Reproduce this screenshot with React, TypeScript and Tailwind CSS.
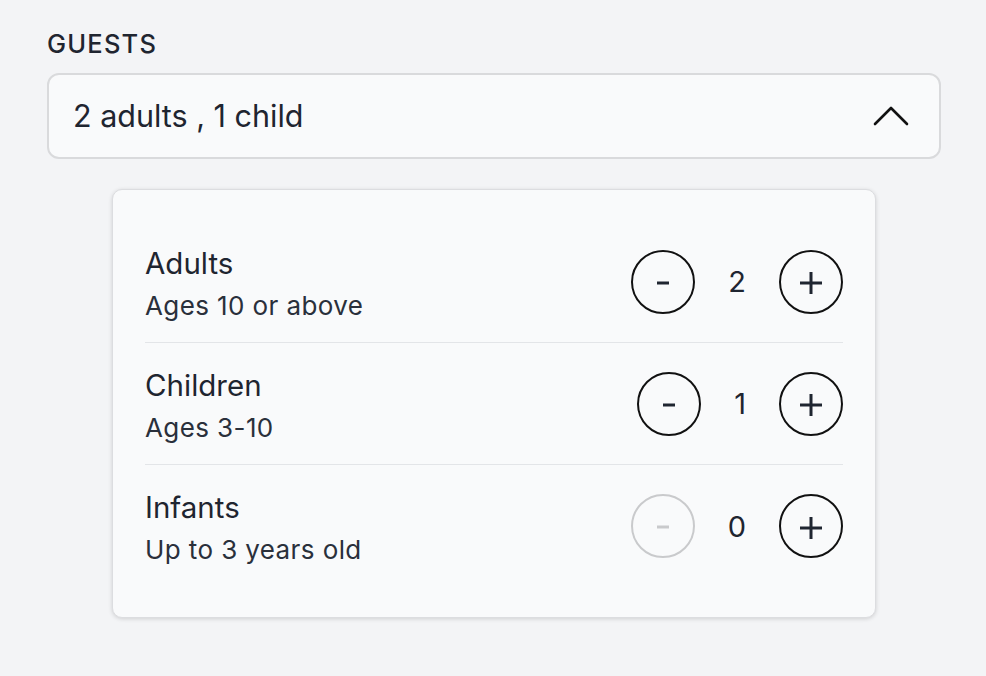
import React, { useState } from 'react'

interface RowProps {
    title: string
    subtitle: string
    value: number
    min: number
    onChange: (v: number) => void
    last?: boolean
}

function CounterRow({ title, subtitle, value, min, onChange, last }: RowProps) {
    const canDec = value > min
    return (
        <div className={`flex items-center justify-between h-[122px] ${last ? '' : 'border-b border-[#e3e5e8]'}`}>
            <div className='flex flex-col pt-[4px]'>
                <span className='text-[29.5px] leading-[36px] text-[#1f2530]'>{title}</span>
                <span className='text-[26px] leading-[34px] mt-[8px] tracking-[0.4px] text-[#2a303b]'>{subtitle}</span>
            </div>
            <div className='flex items-center gap-[33px]'>
                <button
                    onClick={() => canDec && onChange(value - 1)}
                    className={`w-[64px] h-[64px] rounded-full border-2 flex items-center justify-center ${canDec ? 'border-[#111]' : 'border-[#c9cacc]'}`}
                >
                    <svg width='14' height='14' viewBox='0 0 14 14'>
                        <line x1='1' y1='8' x2='13' y2='8' stroke={canDec ? '#1f2530' : '#c9cacc'} strokeWidth='3' />
                    </svg>
                </button>
                <span className='text-[29px] leading-none text-[#1f2530] text-center'>{value}</span>
                <button
                    onClick={() => onChange(value + 1)}
                    className='w-[64px] h-[64px] rounded-full border-2 border-[#111] flex items-center justify-center'
                >
                    <svg width='22' height='22' viewBox='0 0 22 22' className='mt-[3px]'>
                        <line x1='0' y1='11' x2='22' y2='11' stroke='#1f2530' strokeWidth='3' />
                        <line x1='11' y1='0' x2='11' y2='22' stroke='#1f2530' strokeWidth='3' />
                    </svg>
                </button>
            </div>
        </div>
    )
}

export default function App() {
    const [adults, setAdults] = useState(2)
    const [children, setChildren] = useState(1)
    const [infants, setInfants] = useState(0)

    const summary = `${adults} adults , ${children} child`

    return (
        <div className='min-h-screen bg-[#f3f4f6] pl-[47px] pr-[45px] pt-[27px]' style={{ fontFamily: 'Inter, "Noto Sans", sans-serif' }}>
            <div className='text-[25.5px] leading-[34px] font-medium text-[#1f2530] tracking-[1.2px]'>GUESTS</div>
            <div className='mt-[12px] h-[86px] bg-[#f9fafb] border-2 border-[#d9dadc] rounded-[12px] flex items-center justify-between pl-[24px] pr-[30px]'>
                <span className='text-[30.5px] text-[#1f2530]'>{summary}</span>
                <svg width='36' height='22' viewBox='0 0 36 22' fill='none'>
                    <polyline points='2,19 18,3 34,19' stroke='#111' strokeWidth='2.6' strokeLinecap='round' strokeLinejoin='round' />
                </svg>
            </div>
            <div className='mx-[65px] mt-[30px] bg-[#f9fafb] rounded-[10px] border border-[#dcdde0] shadow-[0_1px_4px_rgba(0,0,0,0.15)] px-[32px] pt-[31px] pb-[30px]'>
                <CounterRow title='Adults' subtitle='Ages 10 or above' value={adults} min={1} onChange={setAdults} />
                <CounterRow title='Children' subtitle='Ages 3-10' value={children} min={0} onChange={setChildren} />
                <CounterRow title='Infants' subtitle='Up to 3 years old' value={infants} min={0} onChange={setInfants} last />
            </div>
        </div>
    )
}
